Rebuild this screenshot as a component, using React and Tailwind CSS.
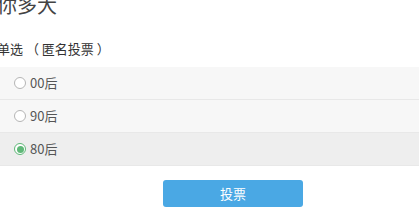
export default function App() {
  const font = { fontFamily: '"Microsoft YaHei", "Noto Sans CJK SC", sans-serif' };
  const items = [
    { label: "00后", checked: false },
    { label: "90后", checked: false },
    { label: "80后", checked: true },
  ];
  return (
    <div className="w-[419px] h-[209px] bg-white overflow-hidden" style={font}>
      <div className="ml-[-3px] mt-[-7px] h-[24px] text-[20px] leading-[24px] text-[#444] whitespace-nowrap">你多大</div>
      <div className="mt-[24px] ml-[-3px] text-[13px] leading-[16px] text-[#333] whitespace-pre">单选 （ 匿名投票 ）</div>
      <div className="mt-[10px] flex flex-col">
        {items.map((it, i) => (
          <div
            key={i}
            className={
              "h-[33px] flex items-center pl-[14px] border-b border-[#e8e8e8] " +
              (it.checked ? "bg-[#eeeeee]" : "bg-[#f7f7f7]")
            }
          >
            {it.checked ? (
              <span className="w-[12px] h-[12px] rounded-full border border-[#5fb878] flex items-center justify-center bg-white">
                <span className="w-[7px] h-[7px] rounded-full bg-[#5fb878]" />
              </span>
            ) : (
              <span className="w-[12px] h-[12px] rounded-full border border-[#b5b5b5] bg-white" />
            )}
            <span className="ml-[4px] text-[13px] text-[#555]">{it.label}</span>
          </div>
        ))}
      </div>
      <div className="flex justify-center mt-[14px] pl-[47px]">
        <button className="w-[140px] h-[27px] rounded-[3px] bg-[#4aa8e4] text-white text-[13px]">投票</button>
      </div>
    </div>
  );
}
